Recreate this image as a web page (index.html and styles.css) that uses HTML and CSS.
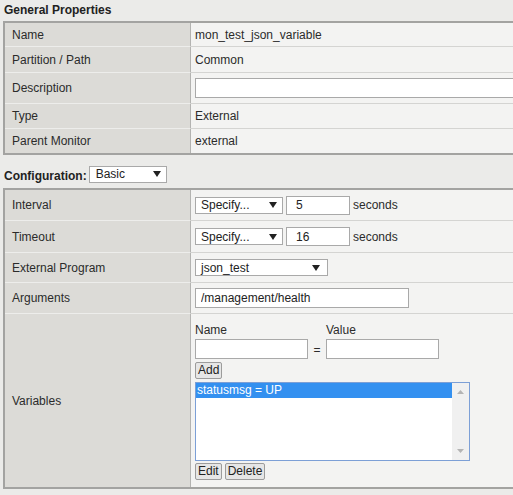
FILE: index.html
```html
<!DOCTYPE html>
<html>
<head>
<meta charset="utf-8">
<link rel="stylesheet" href="styles.css">
</head>
<body>
<div class="page">
  <h2 class="section-title">General Properties</h2>
  <div class="props props-general">
    <div class="label r-name">Name</div><div class="value r-name">mon_test_json_variable</div>
    <div class="label r-part">Partition / Path</div><div class="value r-part">Common</div>
    <div class="label r-desc">Description</div><div class="value r-desc"><input class="text wide" type="text" value=""></div>
    <div class="label r-type">Type</div><div class="value r-type">External</div>
    <div class="label r-parent last">Parent Monitor</div><div class="value r-parent last">external</div>
  </div>

  <div class="config-bar">
    <span class="config-label">Configuration:</span>
    <div class="select sel-basic"><span>Basic</span><svg class="arrow" width="8" height="6" viewBox="0 0 8 6"><polygon points="0,0 8,0 4,6" fill="#222"/></svg></div>
  </div>

  <div class="props props-config">
    <div class="label r-int">Interval</div>
    <div class="value r-int">
      <div class="select sel-spec"><span>Specify...</span><svg class="arrow" width="8" height="6" viewBox="0 0 8 6"><polygon points="0,0 8,0 4,6" fill="#222"/></svg></div>
      <input class="text num" type="text" value="5">
      <span class="unit">seconds</span>
    </div>
    <div class="label r-tmo">Timeout</div>
    <div class="value r-tmo">
      <div class="select sel-spec"><span>Specify...</span><svg class="arrow" width="8" height="6" viewBox="0 0 8 6"><polygon points="0,0 8,0 4,6" fill="#222"/></svg></div>
      <input class="text num" type="text" value="16">
      <span class="unit">seconds</span>
    </div>
    <div class="label r-ext">External Program</div>
    <div class="value r-ext">
      <div class="select sel-prog"><span>json_test</span><svg class="arrow" width="8" height="6" viewBox="0 0 8 6"><polygon points="0,0 8,0 4,6" fill="#222"/></svg></div>
    </div>
    <div class="label r-args">Arguments</div>
    <div class="value r-args"><input class="text args" type="text" value="/management/health"></div>
    <div class="label r-vars last">Variables</div>
    <div class="value r-vars last">
      <div class="var-editor">
        <div class="var-head">Name</div><div></div><div class="var-head">Value</div>
        <input class="text var-in" type="text" value=""><div class="eq">=</div><input class="text var-in" type="text" value="">
      </div>
      <div class="btn-row"><button class="btn">Add</button></div>
      <div class="listbox">
        <div class="list-items">
          <div class="list-item selected">statusmsg = UP</div>
        </div>
        <div class="scrollbar">
          <svg width="7" height="4" viewBox="0 0 7 4"><polygon points="0,4 7,4 3.5,0" fill="#b4b4b4"/></svg>
          <svg width="7" height="4" viewBox="0 0 7 4"><polygon points="0,0 7,0 3.5,4" fill="#b4b4b4"/></svg>
        </div>
      </div>
      <div class="btn-row btns-bottom"><button class="btn">Edit</button><button class="btn">Delete</button></div>
    </div>
  </div>
</div>
</body>
</html>
```
FILE: styles.css
```css
html, body {
  margin: 0;
  padding: 0;
  overflow: hidden;
  background: #ebebe9;
  font-family: "Liberation Sans", Arial, sans-serif;
  font-size: 12px;
  color: #2b2b2b;
}

.page {
  padding-left: 3px;
  width: 540px;
}

.section-title {
  margin: 0;
  padding: 3px 0 0 1px;
  height: 21px;
  box-sizing: border-box;
  font-size: 12px;
  line-height: 14px;
  font-weight: bold;
  color: #222;
}

.props {
  display: grid;
  grid-template-columns: 186px 1fr;
  border: 2px solid #a3a3a1;
  width: 530px;
  box-sizing: border-box;
}

.label, .value {
  box-sizing: border-box;
  display: flex;
  align-items: center;
}

.label {
  background: #dcdbd7;
  padding-left: 7px;
  border-right: 1px solid #b3b3b1;
  border-bottom: 1px solid #ededeb;
}

.value {
  background: #f3f3f2;
  padding-left: 4px;
  border-bottom: 1px solid #d4d4d2;
  gap: 3px;
}

.label.last, .value.last { border-bottom: none; }

.r-name { height: 24px; }
.r-part { height: 26px; }
.r-desc { height: 31px; }
.r-type { height: 25px; }
.r-parent { height: 24px; }

.r-int { height: 31px; }
.r-tmo { height: 32px; }
.r-ext { height: 30px; }
.r-args { height: 31px; }
.r-vars { height: 173px; }

.config-bar {
  display: flex;
  align-items: center;
  height: 18px;
  margin: 10px 0 5px 0;
  padding-left: 1px;
}

.config-label {
  font-weight: bold;
  color: #222;
  font-size: 12px;
  margin-right: 2px;
  padding-top: 4px;
}

.select {
  display: flex;
  align-items: center;
  justify-content: space-between;
  box-sizing: border-box;
  background: #fff;
  border: 1px solid #a9a9a9;
  height: 17px;
  padding: 0 5px 0 5px;
  color: #222;
}

.sel-basic { width: 78px; padding-left: 6px; }
.sel-spec { width: 88px; }
.sel-prog { width: 133px; padding-right: 7px; }

.arrow { flex: none; }

.text {
  box-sizing: border-box;
  height: 20px;
  border: 1px solid #a9a9a9;
  background: #fff;
  font-family: "Liberation Sans", Arial, sans-serif;
  font-size: 12px;
  color: #222;
  padding: 0 0 0 9px;
  margin: 0;
  outline: none;
}

.wide { width: 340px; }
.num { width: 64px; height: 19px; }
.args { width: 214px; padding-left: 5px; }

.unit { color: #2b2b2b; }

.r-vars.value {
  flex-direction: column;
  align-items: flex-start;
  justify-content: flex-start;
  gap: 0;
  padding-top: 9px;
}

.var-editor {
  display: grid;
  grid-template-columns: 113px 18px 113px;
  grid-template-rows: 14px 20px;
  row-gap: 2px;
}

.var-head { line-height: 14px; }
.var-head:last-child { padding-left: 1px; }
.var-in { width: 113px; padding-left: 4px; }
.eq { display: flex; align-items: center; justify-content: center; padding-top: 1px; }

.btn-row {
  display: flex;
  gap: 3px;
  margin-top: 3px;
}

.btns-bottom { margin-top: 2px; }

.btn {
  box-sizing: border-box;
  height: 17px;
  margin: 0;
  padding: 0 2px;
  border: 1px solid #9c9c9c;
  border-radius: 2px;
  background: #e6e6e6;
  font-family: "Liberation Sans", Arial, sans-serif;
  font-size: 12px;
  line-height: 15px;
  color: #222;
}

.listbox {
  display: flex;
  box-sizing: border-box;
  width: 275px;
  height: 79px;
  margin-top: 3px;
  border: 1px solid #7c9fd6;
  background: #fff;
}

.list-items { flex: 1; }

.list-item {
  height: 15px;
  line-height: 15px;
  padding-left: 1px;
  color: #222;
}

.list-item.selected {
  background: #3390f0;
  color: #fff;
}

.scrollbar {
  width: 17px;
  background: #f0f0f0;
  display: flex;
  flex-direction: column;
  justify-content: space-between;
  align-items: center;
  padding: 7px 0 7px 0;
  box-sizing: border-box;
}
```
